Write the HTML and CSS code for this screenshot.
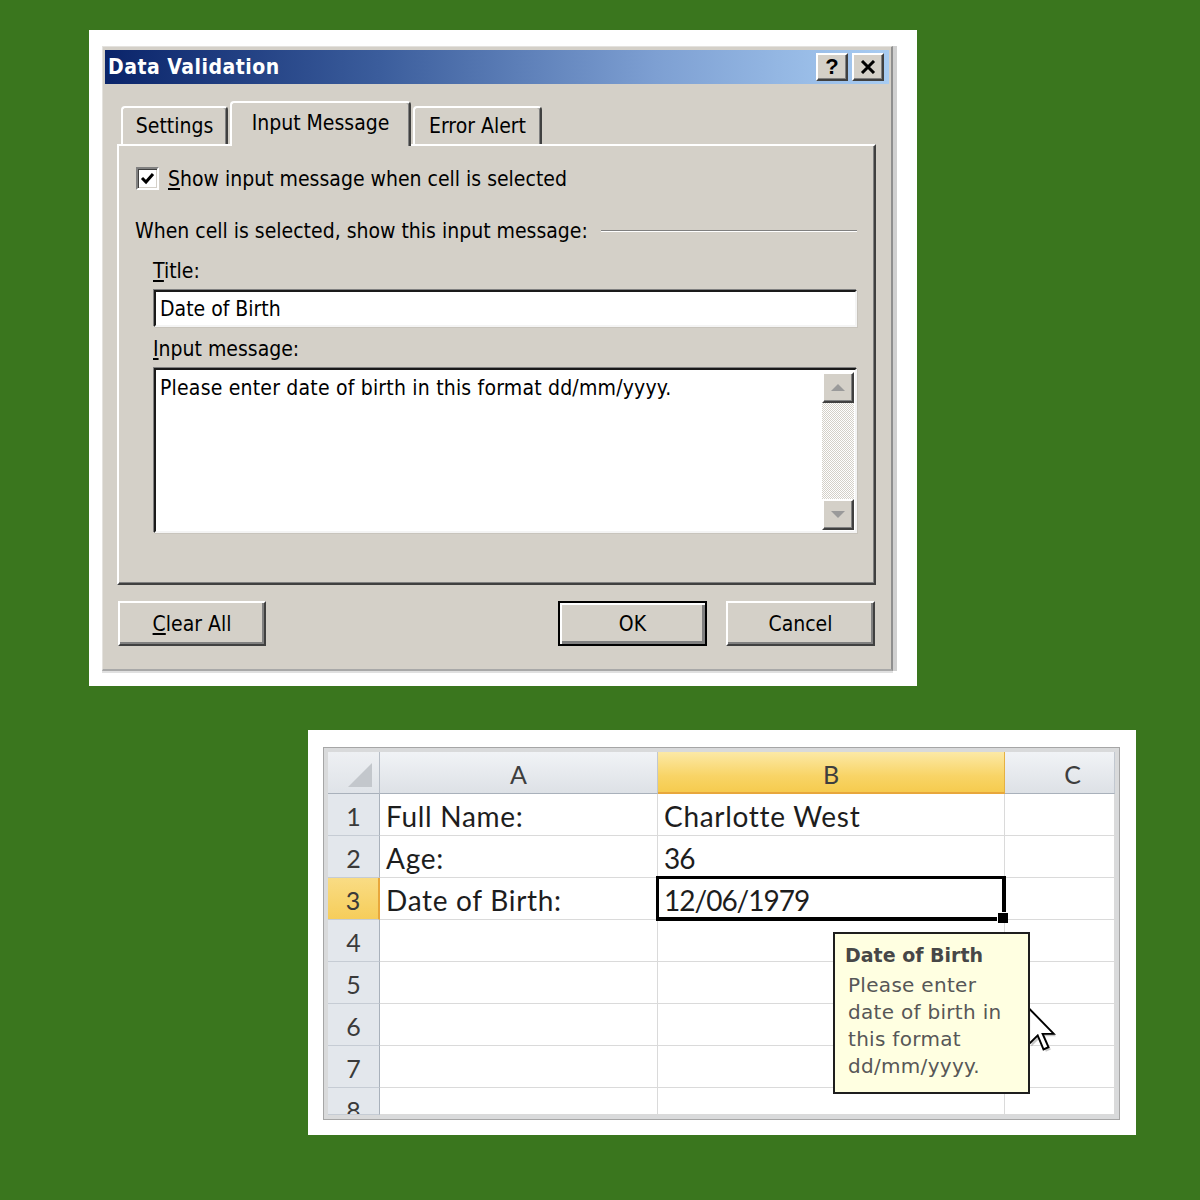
FILE: index.html
```html
<!DOCTYPE html>
<html lang="en">
<head>
<meta charset="utf-8">
<title>Data Validation – Input Message</title>
<link rel="stylesheet" href="styles.css">
</head>
<body>
<div class="stage">

  <section class="frame frame-dialog">
    <div class="dialog">
      <div class="titlebar">
        <span class="title">Data Validation</span>
        <div class="caption-btns">
          <div class="cap-btn cap-help">?</div>
          <div class="cap-btn">
            <svg width="16" height="14" viewBox="0 0 16 14"><path d="M2 1 L14 13 M14 1 L2 13" stroke="#000" stroke-width="3" fill="none"/></svg>
          </div>
        </div>
      </div>

      <div class="dlg-body">
        <div class="tabs">
          <div class="tab tab-settings">Settings</div>
          <div class="tab tab-active">Input Message</div>
          <div class="tab tab-error">Error Alert</div>
        </div>

        <div class="tab-panel">
          <div class="check-row">
            <span class="checkbox">
              <svg width="15" height="15" viewBox="0 0 15 15"><path d="M2 7 L6 11 L13 3" stroke="#000" stroke-width="3" fill="none"/></svg>
            </span>
            <span><u>S</u>how input message when cell is selected</span>
          </div>

          <div class="group-head">
            <span>When cell is selected, show this input message:</span>
            <span class="etch"></span>
          </div>

          <div class="field-label field-title"><u>T</u>itle:</div>
          <div class="textbox">Date of Birth</div>

          <div class="field-label field-msg"><u>I</u>nput message:</div>
          <div class="textarea">
            <div class="ta-text">Please enter date of birth in this format dd/mm/yyyy.</div>
            <div class="vscroll">
              <div class="sb-btn">
                <svg width="14" height="8" viewBox="0 0 14 8"><path d="M7 0 L14 7 L0 7 Z" fill="#9a9a9a"/></svg>
              </div>
              <div class="sb-track"></div>
              <div class="sb-btn">
                <svg width="14" height="8" viewBox="0 0 14 8"><path d="M0 0 L14 0 L7 7 Z" fill="#9a9a9a"/></svg>
              </div>
            </div>
          </div>
        </div>

        <div class="btn-row">
          <div class="btn btn-clear"><u>C</u>lear All</div>
          <div class="btn btn-ok">OK</div>
          <div class="btn btn-cancel">Cancel</div>
        </div>
      </div>
    </div>
  </section>

  <section class="frame frame-sheet">
    <div class="sheet">
      <div class="grid">
        <div class="corner">
          <svg width="24" height="24" viewBox="0 0 24 24"><path d="M24 0 L24 24 L0 24 Z" fill="#c3c7cc"/></svg>
        </div>
        <div class="ch">A</div>
        <div class="ch ch-sel">B</div>
        <div class="ch ch-last">C</div>

        <div class="rh">1</div>
        <div class="c">Full Name:</div>
        <div class="c">Charlotte West</div>
        <div class="c"></div>

        <div class="rh">2</div>
        <div class="c">Age:</div>
        <div class="c c-num">36</div>
        <div class="c"></div>

        <div class="rh rh-sel">3</div>
        <div class="c">Date of Birth:</div>
        <div class="c c-num c-active">12/06/1979</div>
        <div class="c"></div>

        <div class="rh">4</div><div class="c"></div><div class="c"></div><div class="c"></div>
        <div class="rh">5</div><div class="c"></div><div class="c"></div><div class="c"></div>
        <div class="rh">6</div><div class="c"></div><div class="c"></div><div class="c"></div>
        <div class="rh">7</div><div class="c"></div><div class="c"></div><div class="c"></div>
        <div class="rh">8</div><div class="c"></div><div class="c"></div><div class="c"></div>

        <svg class="cursor" width="28" height="46" viewBox="0 0 13 21">
          <path d="M1.6 1.8 L1.6 18.2 L5.6 14.2 L8.3 20.6 L10.6 19.6 L7.9 13.4 L13 13.4 Z" fill="rgba(0,0,0,0.22)"/>
          <path d="M0.5 0.5 L0.5 17 L4.5 13 L7.2 19.5 L9.5 18.5 L6.8 12.3 L12 12.3 Z" fill="#fff" stroke="#000" stroke-width="0.9"/>
        </svg>

        <div class="tip">
          <div class="tip-title">Date of Birth</div>
          <div class="tip-body">Please enter<br>date of birth in<br>this format<br>dd/mm/yyyy.</div>
        </div>
      </div>
    </div>
  </section>

</div>
</body>
</html>
```

FILE: styles.css
```css
* { box-sizing: border-box; }

body {
  margin: 0;
  width: 1200px;
  height: 1200px;
  background: #3a761e;
  overflow: hidden;
}

.stage {
  display: flex;
  flex-direction: column;
  align-items: flex-start;
  padding-top: 30px;
}

.frame { background: #fff; }

/* ---------- Data Validation dialog ---------- */

.frame-dialog {
  margin-left: 89px;
  width: 828px;
  height: 656px;
  padding: 16px 0 0 13px;
}

.dialog {
  width: 791px;
  background: #d4d0c8;
  border: 1px solid #e4e2de;
  border-right: 2px solid #8f8f8f;
  border-bottom: 2px solid #a8a8a8;
  padding: 3px 2px;
  box-shadow: 4px 0 0 #d0d0d0, 0 2px 0 #e0e0e0;
  font-family: "DejaVu Sans Condensed", "DejaVu Sans", sans-serif;
  font-stretch: condensed;
  font-size: 21px;
  color: #000;
}

.titlebar {
  height: 34px;
  display: flex;
  align-items: center;
  justify-content: space-between;
  padding: 0 5px 0 3px;
  background: linear-gradient(90deg, #0a246a 0%, #3b5d9c 35%, #7d9fd2 70%, #a8ccf2 100%);
}

.title {
  color: #fff;
  font-weight: bold;
  font-size: 21px;
  letter-spacing: 0.5px;
}

.caption-btns { display: flex; gap: 4px; }

.cap-btn {
  width: 32px;
  height: 28px;
  background: #d4d0c8;
  border: 2px solid;
  border-color: #fff #404040 #404040 #fff;
  box-shadow: inset -1px -1px #808080;
  display: flex;
  align-items: center;
  justify-content: center;
}

.cap-help {
  font-family: "Liberation Sans", sans-serif;
  font-weight: bold;
  font-size: 22px;
  line-height: 1;
}

.dlg-body { padding: 17px 13px 20px 12px; }

/* tabs */
.tabs {
  display: flex;
  align-items: flex-end;
  height: 43px;
  position: relative;
  z-index: 1;
}

.tab {
  height: 38px;
  background: #d4d0c8;
  border: 2px solid;
  border-color: #fff #404040 transparent #fff;
  border-bottom: 0;
  border-radius: 4px 4px 0 0;
  box-shadow: inset -1px 0 #808080;
  display: flex;
  justify-content: center;
  padding-top: 6px;
  white-space: nowrap;
}

.tab-settings { width: 107px; margin-left: 4px; }
.tab-error { width: 129px; margin-left: 2px; }

.tab-active {
  width: 181px;
  height: 45px;
  margin-left: 2px;
  margin-bottom: -2px;
  padding-top: 8px;
}

.tab-panel {
  height: 441px;
  border: 2px solid;
  border-color: #fff #404040 #404040 #fff;
  box-shadow: inset -1px -1px #808080;
  padding: 21px 17px 0 17px;
}

.check-row {
  display: flex;
  align-items: center;
  gap: 9px;
  height: 23px;
}

.checkbox {
  width: 23px;
  height: 23px;
  background: #fff;
  border: 2px solid;
  border-color: #808080 #fff #fff #808080;
  box-shadow: inset 1px 1px #404040, inset -1px -1px #d4d0c8;
  display: flex;
  align-items: center;
  justify-content: center;
}

.group-head {
  display: flex;
  align-items: center;
  gap: 13px;
  margin-top: 29px;
  height: 24px;
  margin-left: -1px;
}

.etch {
  flex: 1;
  height: 2px;
  border-top: 1px solid #808080;
  border-bottom: 1px solid #fff;
}

.field-label {
  margin-left: 17px;
  line-height: 24px;
}
.field-title { margin-top: 16px; }
.field-msg { margin-top: 10px; }

.textbox,
.textarea {
  margin-left: 18px;
  width: 703px;
  background: #fff;
  border: 2px solid;
  border-color: #1a1a1a #f4f4f4 #f4f4f4 #1a1a1a;
  box-shadow: -1px -1px 0 #808080, 1px 1px 0 #c8c4bc;
}

.textbox {
  height: 37px;
  margin-top: 7px;
  padding: 4px 4px 0 4px;
  line-height: 27px;
}

.textarea {
  height: 165px;
  margin-top: 7px;
  display: flex;
  padding: 3px 1px 1px 4px;
}

.ta-text {
  flex: 1;
  line-height: 30px;
  letter-spacing: 0.2px;
}

.vscroll {
  width: 32px;
  display: flex;
  flex-direction: column;
  margin-top: -1px;
}

.sb-btn {
  height: 31px;
  background: #d4d0c8;
  border: 2px solid;
  border-color: #fff #404040 #404040 #fff;
  box-shadow: inset -1px -1px #808080;
  display: flex;
  align-items: center;
  justify-content: center;
}

.sb-track {
  flex: 1;
  background-color: #fff;
  background-image: repeating-conic-gradient(#d4d0c8 0 25%, #fff 0 50%);
  background-size: 2px 2px;
}

/* buttons */
.btn-row {
  display: flex;
  margin-top: 16px;
  height: 45px;
}

.btn {
  height: 45px;
  width: 149px;
  background: #d4d0c8;
  border: 2px solid;
  border-color: #fff #404040 #404040 #fff;
  box-shadow: inset -2px -2px #808080;
  display: flex;
  align-items: center;
  justify-content: center;
}

.btn-clear { width: 148px; margin-left: 1px; }
.btn-ok {
  margin-left: auto;
  border: 2px solid #000;
  box-shadow: inset 2px 2px #fff, inset -3px -3px #808080;
}
.btn-cancel { margin-left: 19px; margin-right: 1px; }

/* ---------- Spreadsheet ---------- */

.frame-sheet {
  margin-left: 308px;
  margin-top: 44px;
  width: 828px;
  height: 405px;
  padding: 17px 0 0 15px;
}

.sheet {
  width: 797px;
  height: 373px;
  border: 1px solid #a6a6a6;
  background: #d9dadb;
  padding: 4px;
}

.grid {
  position: relative;
  display: grid;
  grid-template-columns: 52px 278px 347px 110px;
  grid-template-rows: repeat(8, 42px) 27px;
  background: #fff;
  font-family: Lato, "Open Sans", sans-serif;
  font-size: 28px;
  color: #1d1d1d;
}

.corner {
  background: linear-gradient(#eef0f3, #dfe3e8);
  border-right: 1px solid #b7bec7;
  border-bottom: 1px solid #a9b1bb;
  display: flex;
  align-items: flex-end;
  justify-content: flex-end;
  padding: 0 7px 6px 0;
}

.ch {
  background: linear-gradient(#f1f3f6, #dde1e6);
  border-right: 1px solid #c2c8d0;
  border-bottom: 1px solid #a9b1bb;
  text-align: center;
  line-height: 44px;
  color: #3e3e3e;
  font-size: 25px;
}

.ch-last { padding-left: 26px; }

.ch-sel {
  background: linear-gradient(#fce9a6, #f8d466 60%, #f6cb4f);
  border-right-color: #e5b143;
  border-bottom: 2px solid #e8a73b;
}

.rh {
  background: #e3e7ec;
  border-right: 1px solid #a9b1bb;
  border-bottom: 1px solid #c6ccd4;
  text-align: center;
  line-height: 44px;
  color: #3a3a3a;
  font-size: 25px;
  overflow: hidden;
}

.rh-sel {
  background: linear-gradient(#f9dc84, #f6cd5a);
  border-right: 2px solid #e8a73b;
}

.c {
  border-right: 1px solid #dadada;
  border-bottom: 1px solid #dadada;
  padding-left: 6px;
  line-height: 44px;
  white-space: nowrap;
  overflow: hidden;
  letter-spacing: 0.7px;
}

.c-num { letter-spacing: -1px; }

.c-active {
  position: relative;
  overflow: visible;
}

.c-active::before {
  content: "";
  position: absolute;
  left: -2px;
  top: -2px;
  right: -2px;
  bottom: -2px;
  border: 4px solid #000;
  border-left-width: 3px;
  border-top-width: 3px;
}

.c-active::after {
  content: "";
  position: absolute;
  right: -4px;
  bottom: -4px;
  width: 10px;
  height: 10px;
  background: #000;
  border: 1px solid #fff;
  border-right: 0;
  border-bottom: 0;
}

.cursor {
  position: absolute;
  left: 700px;
  top: 255px;
}

.tip {
  position: absolute;
  left: 505px;
  top: 180px;
  width: 197px;
  height: 162px;
  background: #ffffe1;
  border: 2px solid #1e1e1e;
  padding: 8px 0 0 10px;
  font-family: "DejaVu Sans", sans-serif;
  font-size: 20px;
  line-height: 27px;
  letter-spacing: 0.3px;
  color: #575757;
}

.tip-title {
  font-weight: bold;
  font-size: 19px;
  letter-spacing: 0;
  color: #474747;
  margin-bottom: 3px;
}

.tip-body { padding-left: 3px; }
```
